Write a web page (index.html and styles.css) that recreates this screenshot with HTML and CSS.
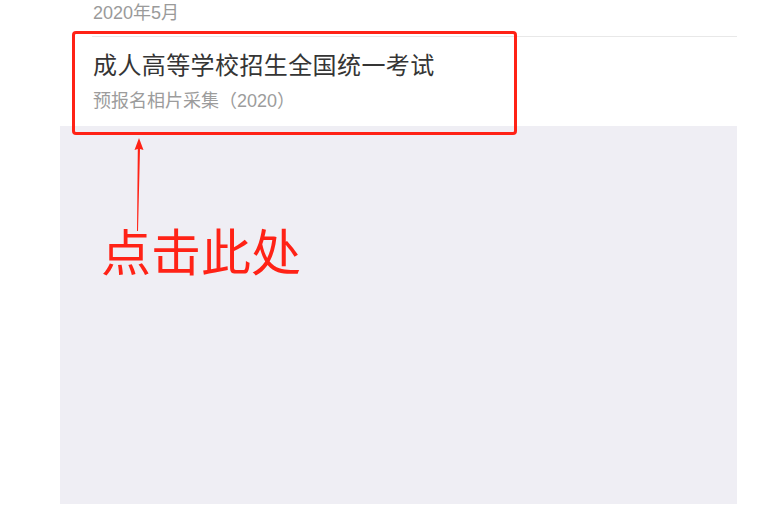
FILE: index.html
```html
<!DOCTYPE html>
<html lang="zh-CN">
<head>
<meta charset="utf-8">
<link rel="stylesheet" href="styles.css">
</head>
<body>
<div class="page">
  <div class="date">2020年5月</div>
  <div class="item">
    <div class="title">成人高等学校招生全国统一考试</div>
    <div class="sub">预报名相片采集（2020）</div>
  </div>
  <div class="empty"></div>
</div>
<div class="highlight"></div>
<svg class="arrow" width="20" height="100" viewBox="0 0 20 100">
  <path d="M10 0 L14.5 12 L11 11 L9 93 L8 93 L8.8 11 L5.5 12 Z" fill="#ff2216"/>
</svg>
<div class="callout">点击此处</div>
</body>
</html>
```
FILE: styles.css
```css
html, body {
  margin: 0;
  padding: 0;
  background: #ffffff;
}
body {
  position: relative;
  width: 760px;
  height: 518px;
  overflow: hidden;
  font-family: "Liberation Sans", "Noto Sans CJK SC", sans-serif;
}
.page {
  margin-left: 60px;
  width: 677px;
}
.date {
  height: 36px;
  padding-left: 33px;
  box-sizing: border-box;
  font-size: 18px;
  line-height: 26px;
  color: #9a9a9a;
}
.item {
  margin-left: 32px;
  border-top: 1px solid #e8e8e8;
  height: 90px;
  padding-top: 12px;
  box-sizing: border-box;
  padding-left: 1px;
}
.title {
  font-size: 24px;
  line-height: 34px;
  color: #353535;
  letter-spacing: 0.4px;
}
.sub {
  margin-top: 6px;
  font-size: 18px;
  line-height: 24px;
  color: #9c9c9c;
}
.empty {
  height: 378px;
  background: #efeef4;
}
.highlight {
  position: absolute;
  left: 72px;
  top: 31px;
  width: 445px;
  height: 104px;
  box-sizing: border-box;
  border: 3px solid #ff2216;
  border-radius: 4px;
}
.arrow {
  position: absolute;
  left: 129px;
  top: 138px;
}
.callout {
  position: absolute;
  left: 101px;
  top: 219px;
  font-size: 50px;
  line-height: 70px;
  color: #ff2216;
}
```
